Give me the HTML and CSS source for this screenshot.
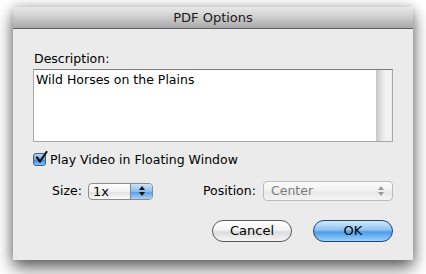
FILE: index.html
```html
<!DOCTYPE html>
<html>
<head>
<meta charset="utf-8">
<link rel="stylesheet" href="styles.css">
</head>
<body>
<div class="window">
  <div class="titlebar">PDF Options</div>
  <div class="content">
    <div class="label">Description:</div>
    <div class="textbox">
      <div class="text">Wild Horses on the Plains</div>
      <div class="scrolltrack"></div>
    </div>
    <div class="check-row">
      <span class="checkbox">
        <svg width="14" height="14" viewBox="0 0 14 14">
          <path d="M3 6.5 L6 10.5 L12.5 1" fill="none" stroke="#111" stroke-width="2.2" stroke-linecap="round" stroke-linejoin="round"/>
        </svg>
      </span>
      <span class="check-label">Play Video in Floating Window</span>
    </div>
    <div class="options-row">
      <span class="opt-label size-label">Size:</span>
      <div class="popup size-popup">
        <span class="popup-text">1x</span>
        <span class="stepper">
          <svg width="8" height="12" viewBox="0 0 8 12">
            <path d="M4 1 L7 5 L1 5 Z" fill="#111"/>
            <path d="M1 7 L7 7 L4 11 Z" fill="#111"/>
          </svg>
        </span>
      </div>
      <span class="opt-label pos-label">Position:</span>
      <div class="popup pos-popup">
        <span class="popup-text disabled">Center</span>
        <span class="stepper-dis">
          <svg width="8" height="12" viewBox="0 0 8 12">
            <path d="M4 1 L7 5 L1 5 Z" fill="#9a9a9a"/>
            <path d="M1 7 L7 7 L4 11 Z" fill="#9a9a9a"/>
          </svg>
        </span>
      </div>
    </div>
    <div class="button-row">
      <div class="btn cancel">Cancel</div>
      <div class="btn ok">OK</div>
    </div>
  </div>
</div>
</body>
</html>
```

FILE: styles.css
```css
html, body {
  margin: 0;
  padding: 0;
  background: #ffffff;
}
body {
  font-family: "DejaVu Sans", "Liberation Sans", sans-serif;
  font-size: 12.5px;
  color: #000;
  padding: 7px 0 0 13px;
  height: 274px;
  box-sizing: border-box;
  overflow: hidden;
}
.window {
  width: 400px;
  height: 253px;
  background: #ebebeb;
  box-shadow: 0 8px 16px rgba(0,0,0,0.6), 0 0 10px rgba(0,0,0,0.2);
  display: flex;
  flex-direction: column;
}
.titlebar {
  height: 21px;
  border-bottom: 1px solid #5e5e5e;
  background: linear-gradient(#e9e9e9, #d2d2d2 40%, #a9a9a9);
  text-align: center;
  line-height: 22px;
  font-size: 13px;
  color: #1a1a1a;
}
.content {
  padding: 22px 20px 0 20px;
  display: flex;
  flex-direction: column;
}
.label {
  height: 16px;
  line-height: 16px;
  padding-left: 1px;
  margin-bottom: 2px;
}
.textbox {
  height: 71px;
  border: 1px solid #a8a8a8;
  border-top-color: #7c7c7c;
  background: #fff;
  display: flex;
}
.text {
  flex: 1;
  padding: 2px 0 0 2px;
  line-height: 16px;
}
.scrolltrack {
  width: 15px;
  background: linear-gradient(90deg, #cccccc, #e2e2e2 30%, #f4f4f4 60%, #efefef);
  border-left: 1px solid #c8c8c8;
}
.check-row {
  margin-top: 9px;
  height: 16px;
  display: flex;
  align-items: center;
}
.checkbox {
  width: 13px;
  height: 13px;
  border: 1px solid #3f5f86;
  border-radius: 3px;
  background: linear-gradient(#b9d6f2, #6aa6e2 50%, #3d86d8 55%, #8ec3f3);
  position: relative;
  box-sizing: border-box;
  margin-right: 4px;
}
.checkbox svg {
  position: absolute;
  left: 0;
  top: -3px;
}
.options-row {
  margin-top: 14px;
  height: 20px;
  display: flex;
  align-items: center;
}
.opt-label {
  line-height: 16px;
}
.size-label {
  margin-left: 19px;
  width: 36px;
}
.popup {
  display: flex;
  align-items: stretch;
  box-sizing: border-box;
  border-radius: 4px;
}
.size-popup {
  width: 65px;
  height: 17px;
  border: 1px solid #8c8c8c;
  background: linear-gradient(#ffffff, #f2f2f2 50%, #e2e2e2 55%, #fafafa);
  margin-right: 50px;
  font-size: 13px;
}
.popup-text {
  flex: 1;
  padding-left: 4px;
  line-height: 15px;
}
.stepper {
  width: 21px;
  border-left: 1px solid #6d89ad;
  border-radius: 0 3px 3px 0;
  background: linear-gradient(#cfe3f7, #8dbcec 50%, #5f9fe3 55%, #a8d2f7);
  display: flex;
  align-items: center;
  justify-content: center;
}
.pos-label {
  width: 60px;
}
.pos-popup {
  width: 130px;
  height: 20px;
  border: 1px solid #bdbdbd;
  background: linear-gradient(#fbfbfb, #f1f1f1 50%, #e9e9e9 55%, #f4f4f4);
}
.pos-popup .popup-text {
  line-height: 18px;
  padding-left: 7px;
}
.disabled {
  color: #7a7a7a;
}
.stepper-dis {
  width: 22px;
  display: flex;
  align-items: center;
  justify-content: center;
}
.button-row {
  margin-top: 19px;
  display: flex;
  justify-content: flex-end;
  gap: 21px;
}
.btn {
  width: 80px;
  height: 22px;
  box-sizing: border-box;
  border-radius: 11px;
  text-align: center;
  line-height: 20px;
  font-size: 13px;
}
.cancel {
  border: 1px solid #5a5a5a;
  background: linear-gradient(#ffffff, #f3f3f3 45%, #dcdcdc 55%, #f6f6f6);
}
.ok {
  border: 1px solid #263f78;
  background: linear-gradient(#d4e9fb, #8dc2f1 45%, #4d9ce8 55%, #9ad2fb);
}
```
